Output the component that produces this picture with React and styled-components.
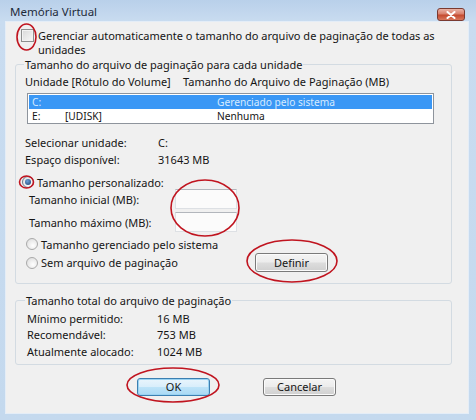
import React from "react";
import styled, { createGlobalStyle, css } from "styled-components";

const Global = createGlobalStyle`
  html, body { margin: 0; padding: 0; overflow: hidden; }
  body { font-family: "Noto Sans", "Open Sans", sans-serif; font-size: 11px; color: #151515; }
`;

const Window = styled.div`
  position: relative;
  width: 476px;
  height: 420px;
  box-sizing: border-box;
  padding: 0 8px 7px 6px;
  display: flex;
  flex-direction: column;
  background: linear-gradient(to bottom, #b9d0ea 0px, #c9dcf0 22px, #c4d9ee 100%);
`;

const TitleBar = styled.div`
  height: 22px;
  flex: 0 0 22px;
  display: flex;
  align-items: flex-start;
  justify-content: space-between;
`;

const Title = styled.div`
  margin: 4px 0 0 4px;
  font-size: 11.5px;
  line-height: 16px;
  color: #1e2b3a;
`;

const CloseButton = styled.div`
  margin: 8px 3px 0 0;
  width: 28px;
  height: 13px;
  box-sizing: border-box;
  border: 1px solid #7a3a30;
  border-radius: 3px;
  background: linear-gradient(to bottom, #eab3a6 0%, #d9806c 45%, #c44a2f 55%, #d8775c 100%);
  display: flex;
  align-items: center;
  justify-content: center;
`;

const Content = styled.div`
  flex: 1;
  background: #f0f0f0;
  box-shadow: 0 0 0 1px #e4edf7;
  display: flex;
  flex-direction: column;
  padding: 7px 16px 0 9px;
`;

const CheckRow = styled.label`
  display: flex;
  align-items: flex-start;
  gap: 4px;
  margin-left: 6px;
  line-height: 14px;
`;

const CheckBox = styled.span`
  flex: 0 0 13px;
  width: 13px;
  height: 13px;
  box-sizing: border-box;
  margin-top: 0;
  border: 1px solid #8e8f8f;
  background: linear-gradient(135deg, #d8d8d8, #f8f8f8);
  box-shadow: inset 0 0 0 1px #f2f2f2;
`;

const Group = styled.fieldset`
  margin: ${(p) => p.$top}px 0 0 0;
  padding: ${(p) => p.$pad};
  border: 1px solid #d3dbe2;
  border-radius: 3px;
  min-width: 0;
`;

const Legend = styled.legend`
  padding: 0 1px;
  margin-left: -1px;
  line-height: 13px;
`;

const Headers = styled.div`
  display: grid;
  grid-template-columns: 158px auto;
  line-height: 14px;
`;

const ListBox = styled.div`
  margin: 4px 0 0 2px;
  width: 407px;
  box-sizing: border-box;
  border: 1px solid #8e949c;
  background: #fff;
  padding: 1px 1px 0 1px;
`;

const ListRow = styled.div`
  display: grid;
  grid-template-columns: 33px 152px auto;
  height: 14px;
  line-height: 14px;
  font-size: 10.2px;
  padding-left: 3px;
  ${(p) =>
    p.$selected &&
    css`
      background: #3a97f5;
      color: #d6ebff;
    `}
`;

const InfoGrid = styled.div`
  display: grid;
  grid-template-columns: ${(p) => p.$col}px auto;
  grid-auto-rows: ${(p) => p.$row}px;
  align-items: center;
  margin-top: ${(p) => p.$top}px;
  margin-left: ${(p) => p.$left || 0}px;
`;

const RadioRow = styled.label`
  display: flex;
  align-items: center;
  gap: 3px;
  height: ${(p) => p.$h || 16}px;
  margin-top: ${(p) => p.$top}px;
  margin-left: ${(p) => p.$left}px;
`;

const RadioLabel = styled.span`
  display: flex;
  align-items: center;
  gap: 3px;
  flex: 0 0 ${(p) => p.$w}px;
`;

const Radio = styled.span`
  position: relative;
  width: 12px;
  height: 12px;
  box-sizing: border-box;
  border-radius: 50%;
  border: 1px solid ${(p) => (p.$checked ? "#6a7a8c" : "#a9a9a9")};
  background: radial-gradient(circle at 60% 65%, #ffffff, #d9d9d9);
  ${(p) =>
    p.$checked &&
    css`
      &::after {
        content: "";
        position: absolute;
        left: 2px;
        top: 2px;
        width: 6px;
        height: 6px;
        border-radius: 50%;
        background: radial-gradient(circle at 40% 35%, #6aa0d8, #1b3e6c);
      }
    `}
`;

const SizeRow = styled.div`
  display: grid;
  grid-template-columns: 146px 62px;
  align-items: center;
  margin: ${(p) => p.$top}px 0 0 4px;
`;

const TextInput = styled.div`
  height: 20px;
  box-sizing: border-box;
  border: 1px solid #dde0e4;
  border-top-color: #b2b6bc;
  background: #fbfbfb;
`;

const Button = styled.button`
  width: 73px;
  height: ${(p) => p.$h || 18}px;
  padding: 0;
  box-sizing: border-box;
  font: inherit;
  color: #151515;
  border-radius: 3px;
  border: 1px solid ${(p) => (p.$default ? "#3c7fb1" : "#7a7a7a")};
  background: ${(p) =>
    p.$default
      ? "linear-gradient(to bottom, #e9f5fc 0%, #d9eefb 48%, #bde3f8 52%, #a9d9f5 100%)"
      : "linear-gradient(to bottom, #f4f4f4 0%, #ececec 48%, #dddddd 52%, #d0d0d0 100%)"};
  box-shadow: inset 0 0 0 1px ${(p) => (p.$default ? "#9ad3f2" : "#fbfbfb")};
`;

const ButtonBar = styled.div`
  display: flex;
  gap: 53px;
  margin-top: 13px;
  padding-left: 122px;
`;

const Overlay = styled.svg`
  position: absolute;
  left: 0;
  top: 0;
  pointer-events: none;
`;

export default function App() {
  return (
    <>
      <Global />
      <Window>
        <TitleBar>
          <Title>Memória Virtual</Title>
          <CloseButton>
            <svg width="10" height="8" viewBox="0 0 10 8">
              <path d="M1.5 1 L8.5 7 M8.5 1 L1.5 7" stroke="#fff" strokeWidth="2" strokeLinecap="round" />
            </svg>
          </CloseButton>
        </TitleBar>
        <Content>
          <CheckRow>
            <CheckBox />
            <span>
              Gerenciar automaticamente o tamanho do arquivo de paginação de todas as
              <br />
              unidades
            </span>
          </CheckRow>

          <Group $top={1} $pad="4px 9px 11px 9px">
            <Legend>Tamanho do arquivo de paginação para cada unidade</Legend>
            <Headers>
              <span>Unidade [Rótulo do Volume]</span>
              <span>Tamanho do Arquivo de Paginação (MB)</span>
            </Headers>
            <ListBox>
              <ListRow $selected>
                <span>C:</span>
                <span></span>
                <span>Gerenciado pelo sistema</span>
              </ListRow>
              <ListRow>
                <span>E:</span>
                <span>[UDISK]</span>
                <span>Nenhuma</span>
              </ListRow>
            </ListBox>
            <InfoGrid $col={133} $row={17} $top={10}>
              <span>Selecionar unidade:</span>
              <span>C:</span>
              <span>Espaço disponível:</span>
              <span>31643 MB</span>
            </InfoGrid>
            <RadioRow $top={7} $left={-3} $h={14}>
              <Radio $checked />
              <span>Tamanho personalizado:</span>
            </RadioRow>
            <SizeRow $top={0}>
              <span>Tamanho inicial (MB):</span>
              <TextInput />
            </SizeRow>
            <SizeRow $top={3}>
              <span>Tamanho máximo (MB):</span>
              <TextInput />
            </SizeRow>
            <RadioRow $top={4} $left={1}>
              <Radio />
              <span>Tamanho gerenciado pelo sistema</span>
            </RadioRow>
            <RadioRow $top={1} $left={1} $h={19}>
              <RadioLabel $w={226}>
                <Radio />
                <span>Sem arquivo de paginação</span>
              </RadioLabel>
              <Button type="button" $h={19}>Definir</Button>
            </RadioRow>
          </Group>

          <Group $top={10} $pad="3px 10px 4px 10px">
            <Legend>Tamanho total do arquivo de paginação</Legend>
            <InfoGrid $col={130} $row={16.5} $top={0} $left={1}>
              <span>Mínimo permitido:</span>
              <span>16 MB</span>
              <span>Recomendável:</span>
              <span>753 MB</span>
              <span>Atualmente alocado:</span>
              <span>1024 MB</span>
            </InfoGrid>
          </Group>

          <ButtonBar>
            <Button type="button" $default>OK</Button>
            <Button type="button">Cancelar</Button>
          </ButtonBar>
        </Content>

        <Overlay width="476" height="420" viewBox="0 0 476 420">
          <g fill="none" stroke="#c0141f" strokeWidth="1.6">
            <ellipse cx="26.5" cy="37" rx="9.5" ry="13" />
            <ellipse cx="26.5" cy="182" rx="7" ry="6" />
            <ellipse cx="205" cy="208" rx="34" ry="28" />
            <ellipse cx="292" cy="261" rx="45" ry="21" />
            <ellipse cx="173" cy="385" rx="46" ry="17" />
          </g>
        </Overlay>
      </Window>
    </>
  );
}
